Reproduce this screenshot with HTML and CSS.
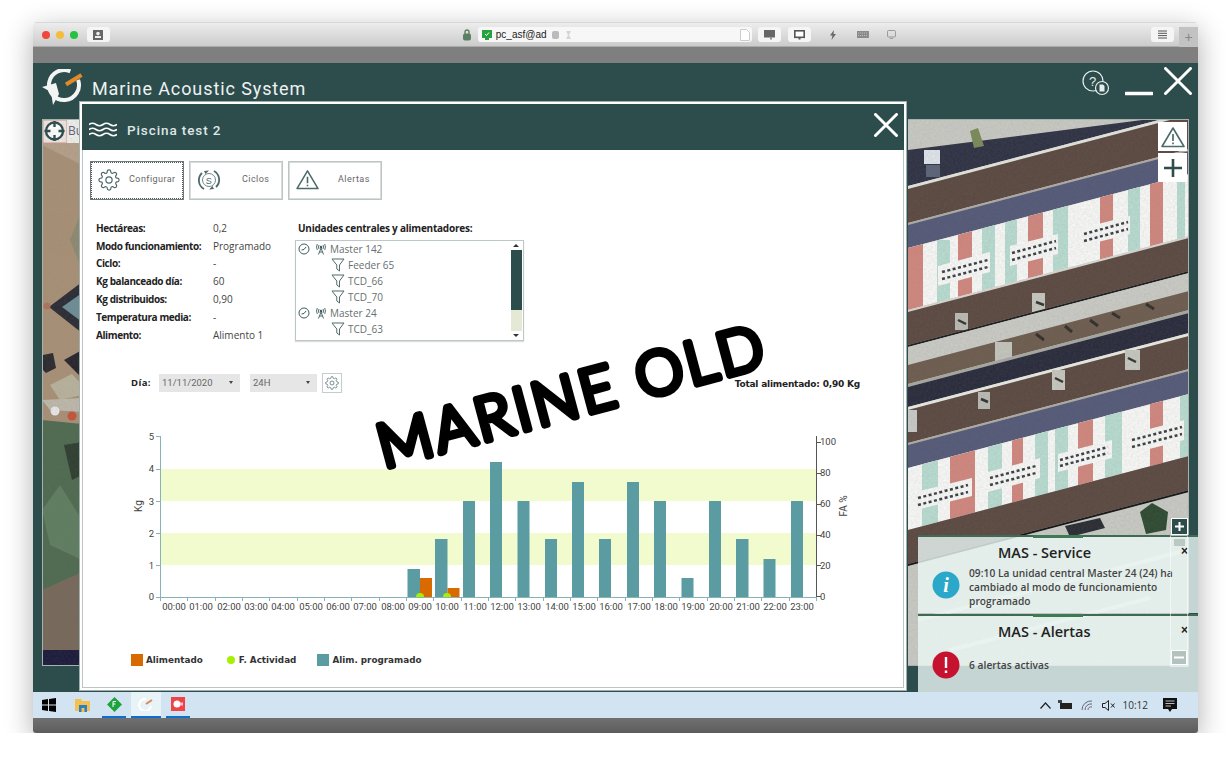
FILE: index.html
```html
<!DOCTYPE html>
<html>

<head>
  <meta charset="utf-8">
  <title>Marine Acoustic System</title>
  <link rel="stylesheet" href="styles.css">
</head>

<body>

  <svg class="defs" width="0" height="0">
    <symbol id="gear" viewBox="0 0 24 24">
      <circle cx="12" cy="12" r="3.4" fill="none" stroke="currentColor" stroke-width="1.3" />
      <path fill="none" stroke="currentColor" stroke-width="1.3" d="M19.4 15a1.65 1.65 0 0 0 .33 1.82l.06.06a2 2 0 0 1 0 2.83 2 2 0 0 1-2.83 0l-.06-.06a1.65 1.65 0 0 0-1.82-.33 1.65 1.65 0 0 0-1 1.51V21a2 2 0 0 1-2 2 2 2 0 0 1-2-2v-.09A1.65 1.65 0 0 0 9 19.4a1.65 1.65 0 0 0-1.82.33l-.06.06a2 2 0 0 1-2.83 0 2 2 0 0 1 0-2.83l.06-.06a1.65 1.65 0 0 0 .33-1.82 1.65 1.65 0 0 0-1.51-1H3a2 2 0 0 1-2-2 2 2 0 0 1 2-2h.09A1.65 1.65 0 0 0 4.6 9a1.65 1.65 0 0 0-.33-1.82l-.06-.06a2 2 0 0 1 0-2.83 2 2 0 0 1 2.83 0l.06.06a1.65 1.65 0 0 0 1.82.33H9a1.65 1.65 0 0 0 1-1.51V3a2 2 0 0 1 2-2 2 2 0 0 1 2 2v.09a1.65 1.65 0 0 0 1 1.51 1.65 1.65 0 0 0 1.82-.33l.06-.06a2 2 0 0 1 2.83 0 2 2 0 0 1 0 2.83l-.06.06a1.65 1.65 0 0 0-.33 1.82V9a1.65 1.65 0 0 0 1.51 1H21a2 2 0 0 1 2 2 2 2 0 0 1-2 2h-.09a1.65 1.65 0 0 0-1.51 1z" />
    </symbol>
    <symbol id="warn" viewBox="0 0 24 22">
      <path d="M12 2 L23 20.500 H1 Z" fill="none" stroke="currentColor" stroke-width="1.600" stroke-linejoin="round" />
      <path d="M12 8 V15 M12 16.500 V18.200" fill="none" stroke="currentColor" stroke-width="1.700" />
    </symbol>
    <symbol id="funnel" viewBox="0 0 14 14">
      <path d="M1 1 H13 L8.500 7 V13 L5.800 11 V7 Z" fill="none" stroke="#4f6a6a" stroke-width="1" />
    </symbol>
    <symbol id="clock" viewBox="0 0 12 12">
      <circle cx="6" cy="6" r="5" fill="none" stroke="#3d5a5a" stroke-width="1" />
      <path d="M3.500 7 L6 6.500 L8 4" fill="none" stroke="#3d5a5a" stroke-width="1" />
    </symbol>
    <symbol id="antenna" viewBox="0 0 12 12">
      <path d="M6 5 L3.500 11.500 M6 5 L8.500 11.500 M4.500 9 H7.500 M4 2 Q3 4 4 6 M8 2 Q9 4 8 6 M2.300 1 Q.8 4 2.300 7 M9.700 1 Q11.200 4 9.700 7" fill="none" stroke="#3d5a5a" stroke-width=".9" />
      <circle cx="6" cy="4" r="1.200" fill="#3d5a5a" />
    </symbol>
  </svg>

  <div class="window">

    <div class="titlebar">
      <span class="light red"></span>
      <span class="light yellow"></span>
      <span class="light green"></span>
      <span class="tbtn contact">
        <svg width="10" height="10" viewBox="0 0 10 10">
          <rect width="10" height="10" fill="#666" />
          <circle cx="5" cy="3.600" r="1.800" fill="#eee" />
          <rect x="2" y="6" width="6" height="2" fill="#eee" />
        </svg>
      </span>
      <svg class="lock" width="8" height="12" viewBox="0 0 8 12">
        <path d="M2 5 V3 a2 2 0 0 1 4 0 V5" fill="none" stroke="#5a7f62" stroke-width="1.400" />
        <rect y="4.500" width="8" height="7" rx="2" fill="#5a7f62" />
      </svg>
      <div class="urlbar">
        <svg width="10" height="10" viewBox="0 0 10 10">
          <rect width="10" height="8" fill="#27a23e" />
          <rect x="3" y="8" width="4" height="2" fill="#27a23e" />
          <path d="M3 4 L4.500 5.500 L7 2.500" fill="none" stroke="#fff" stroke-width="1" />
        </svg>
        <span class="url">pc_asf@ad</span>
        <svg class="url-db" width="7" height="8" viewBox="0 0 7 8">
          <rect width="7" height="8" rx="2" fill="#bbb" />
        </svg>
        <svg class="url-glass" width="5" height="8" viewBox="0 0 5 8">
          <path d="M0 0 H5 L3 4 L5 8 H0 L2 4 Z" fill="#d5d5d5" />
        </svg>
        <svg class="url-doc" width="10" height="12" viewBox="0 0 10 12">
          <path d="M.5 .5 H6.500 L9.500 3.500 V11.500 H.5 Z" fill="#fff" stroke="#ccc" />
        </svg>
      </div>
      <span class="tbtn screen-a">
        <svg width="11" height="10" viewBox="0 0 11 10">
          <rect width="11" height="7.500" fill="#666" />
          <rect x="6" y="7.500" width="2" height="2" fill="#888" />
        </svg>
      </span>
      <span class="tbtn screen-b">
        <svg width="11" height="10" viewBox="0 0 11 10">
          <rect x=".8" y=".8" width="9.400" height="6.500" fill="#fff" stroke="#555" stroke-width="1.600" />
          <rect x="4.500" y="7.500" width="2" height="2" fill="#555" />
        </svg>
      </span>
      <svg class="bolt" width="6" height="10" viewBox="0 0 6 10">
        <path d="M4 0 L0 5.500 H2.500 L1.500 10 L6 4 H3.500 Z" fill="#666" />
      </svg>
      <svg class="keys" width="12" height="7" viewBox="0 0 12 7">
        <rect width="12" height="7" fill="#8a8a8a" />
        <path d="M1 2 H11 M1 4.500 H11" stroke="#ccc" stroke-width=".8" stroke-dasharray="1 1" />
      </svg>
      <svg class="mon" width="9" height="9" viewBox="0 0 9 9">
        <rect x=".5" y=".5" width="8" height="6.500" rx="1" fill="none" stroke="#999" />
        <path d="M3 8.500 H6" stroke="#999" />
      </svg>
      <span class="tbtn menu">
        <svg width="9" height="9" viewBox="0 0 9 9">
          <path d="M0 1 H9 M0 3.300 H9 M0 5.600 H9 M0 8 H9" stroke="#555" stroke-width="1" />
        </svg>
      </span>
      <span class="newtab">+</span>
    </div>

    <div class="graybar"></div>

    <div class="app">

      <div class="app-head">
        <svg class="logo" width="42" height="38" viewBox="42 69 42 38">
          <path d="M70.300 71.400 A15 15 0 1 0 78.100 79.900" fill="none" stroke="#f2f5f4" stroke-width="4" />
          <polygon points="42,87 56,83 59,94 53,105 51,92" fill="#f2f5f4" />
          <path d="M66 84.500 L81.500 75" stroke="#e08a2a" stroke-width="4" />
        </svg>
        <h1 class="app-title">Marine Acoustic System</h1>
        <svg class="app-help" width="28" height="26" viewBox="0 0 28 26">
          <circle cx="11" cy="11" r="10" fill="none" stroke="#e6eeee" stroke-width="1.200" />
          <text x="7" y="16" class="help-q">?</text>
          <circle cx="20" cy="18" r="6.500" fill="#2d4d4d" stroke="#e6eeee" stroke-width="1.200" />
          <path d="M17.500 14.500 H21 L22.500 16 V21.500 H17.500 Z" fill="#e6eeee" />
        </svg>
        <svg class="app-min" width="28" height="5" viewBox="0 0 28 5">
          <path d="M1 2.500 H27" stroke="#fff" stroke-width="3.500" stroke-linecap="round" />
        </svg>
        <svg class="app-close" width="28" height="28" viewBox="0 0 28 28">
          <path d="M1.500 1.500 L26.500 26.500 M26.500 1.500 L1.500 26.500" stroke="#fff" stroke-width="3" stroke-linecap="round" />
        </svg>
      </div>

      <svg class="map" width="1147" height="547" viewBox="42 119 1147 547">
        <defs>
          <clipPath id="roofTop">
            <polygon points="908,248 1189,174 1189,236 908,310" />
          </clipPath>
          <clipPath id="roofLow">
            <polygon points="908,468 1189,394 1189,456 908,530" />
          </clipPath>
          <filter id="grain" x="0" y="0" width="100%" height="100%">
            <feTurbulence type="fractalNoise" baseFrequency=".45" numOctaves="2" seed="4" />
            <feColorMatrix type="matrix" values="0 0 0 0 .2  0 0 0 0 .2  0 0 0 0 .2  .9 .9 0 0 -.55" />
          </filter>
        </defs>

        <!-- left sliver of the photo -->
        <rect x="42" y="119" width="40" height="547" fill="#a89076" />
        <polygon points="42,145 82,165 82,119 42,119" fill="#b5a08a" />
        <polygon points="70,240 82,210 82,270" fill="#8f8a72" />
        <polygon points="49,307 82,282 82,333" fill="#2b2c35" />
        <polygon points="62,307 82,293 82,322" fill="#6e8d96" />
        <circle cx="47" cy="306" r="3.500" fill="#b0725c" />
        <polygon points="43,355 53,353 56,368 46,373 43,370" fill="#2b2b30" />
        <polygon points="64,360 82,350 82,378" fill="#26262c" />
        <polygon points="50,385 72,374 82,385 82,395 60,400" fill="#b8b29c" />
        <polygon points="42,400 82,398 82,412 50,410" fill="#bdb8aa" />
        <circle cx="55" cy="411" r="4.500" fill="#e8e8e8" />
        <circle cx="72" cy="416" r="4.500" fill="#c4553a" />
        <polygon points="42,420 82,424 82,585 42,590" fill="#4f6b50" />
        <polygon points="64,445 82,442 82,475 72,480" fill="#2f3f30" />
        <polygon points="42,510 60,485 82,520 82,560 50,545" fill="#5f7d60" />
        <polygon points="42,590 82,572 82,660 42,650" fill="#77695a" />
        <rect x="42" y="650" width="40" height="16" fill="#1c1b3c" />

        <!-- crosshair button and search box -->
        <rect x="43" y="120" width="24" height="23" fill="#f0e6e2" stroke="#c99a90" />
        <rect x="67" y="120" width="15" height="23" fill="#eeeeea" />
        <text x="68" y="135" class="map-search">Bu</text>
        <circle cx="54.500" cy="131" r="8.500" fill="#fff" stroke="#2d4d4d" stroke-width="2.400" />
        <path d="M54.500 121 V127 M54.500 135 V141 M44.500 131 H50.500 M58.500 131 H64.500" stroke="#2d4d4d" stroke-width="2.400" />

        <!-- right part of the photo: concrete and roofs follow the same slope -->
        <rect x="908" y="119" width="281" height="547" fill="#c8c9c3" />
        <polygon points="908,150 1150,119 1189,119 1189,112 908,186" fill="#2f3344" />
        <rect x="924" y="150" width="16" height="14" fill="#dfe4ea" />
        <rect x="926" y="165" width="14" height="12" fill="#5c6478" />
        <polygon points="970,131 978,128 984,146 974,148" fill="#7b8a5a" />
        <polygon points="908,186 1189,112 1189,115 908,189" fill="#e4e4de" />
        <polygon points="908,189 1189,115 1189,149 908,223" fill="#5c4a42" />
        <polygon points="908,223 1189,149 1189,151 908,225" fill="#b0aca4" />
        <polygon points="908,225 1189,151 1189,174 908,248" fill="#555a78" />

        <polygon points="908,248 1189,174 1189,236 908,310" fill="#f7f8f6" />
        <g clip-path="url(#roofTop)">
          <rect x="908" y="240" width="15" height="80" fill="#d0877e" />
          <rect x="937" y="240" width="13" height="80" fill="#b8dbd0" />
          <rect x="958" y="230" width="14" height="80" fill="#d0877e" />
          <rect x="982" y="220" width="13" height="90" fill="#b8dbd0" />
          <rect x="1005" y="220" width="12" height="90" fill="#b8dbd0" />
          <rect x="1028" y="210" width="15" height="90" fill="#d0877e" />
          <rect x="1053" y="200" width="15" height="90" fill="#b8dbd0" />
          <rect x="1100" y="190" width="13" height="90" fill="#d0877e" />
          <rect x="1128" y="180" width="12" height="90" fill="#b8dbd0" />
          <rect x="1150" y="170" width="13" height="90" fill="#d0877e" />
          <rect x="1177" y="170" width="8" height="80" fill="#b8dbd0" />
          <polygon points="938,266 990,252 990,272 938,286" fill="#f7f8f6" />
          <polygon points="1010,246 1058,234 1058,254 1010,266" fill="#f7f8f6" />
          <polygon points="1082,228 1130,216 1130,234 1082,246" fill="#f7f8f6" />
          <path d="M942 272 L988 260 M942 279 L988 267 M1012 253 L1056 241 M1012 260 L1056 248 M1084 234 L1128 222 M1084 241 L1128 229" stroke="#3c4046" stroke-width="2.500" stroke-dasharray="3 2.500" />
        </g>

        <polygon points="908,310 1189,236 1189,238 908,312" fill="#d8d6d0" />
        <polygon points="908,312 1189,238 1189,271 908,345" fill="#5c4a42" />
        <rect x="955" y="313" width="13" height="17" fill="#b9bab2" />
        <rect x="1032" y="293" width="13" height="19" fill="#c5c6bd" />
        <path d="M958 320 L966 324 M1036 302 L1044 305" stroke="#333" stroke-width="2.500" />
        <polygon points="908,345 1189,271 1189,273 908,347" fill="#1b1a1c" />
        <polygon points="908,347 1189,273 1189,291 908,365" fill="#c9cac4" />
        <polygon points="908,365 1189,291 1189,310 908,384" fill="#6e5d50" />
        <rect x="995" y="342" width="17" height="19" fill="#c3c4bc" />
        <path d="M1036 334 L1044 340 M1065 326 L1072 332 M1090 320 L1098 326 M1112 313 L1120 318 M1146 304 L1154 309" stroke="#33302c" stroke-width="3" />
        <polygon points="908,384 1189,310 1189,313 908,387" fill="#a8a8a2" />
        <polygon points="908,387 1189,313 1189,333 908,407" fill="#2a2c3d" />
        <polygon points="908,407 1189,333 1189,336 908,410" fill="#e9e9e2" />
        <polygon points="908,410 1189,336 1189,369 908,443" fill="#5c4a42" />
        <rect x="908" y="410" width="9" height="22" fill="#c7cac6" />
        <rect x="978" y="392" width="12" height="17" fill="#b9bab2" />
        <rect x="1052" y="370" width="13" height="20" fill="#c5c6bd" />
        <rect x="1125" y="350" width="15" height="20" fill="#c5c6bd" />
        <path d="M981 399 L988 402 M1055 378 L1063 382 M1128 358 L1136 362" stroke="#333" stroke-width="2.500" />
        <polygon points="908,443 1189,369 1189,371 908,445" fill="#b0aca4" />
        <polygon points="908,445 1189,371 1189,394 908,468" fill="#555a78" />

        <polygon points="908,468 1189,394 1189,456 908,530" fill="#f7f8f6" />
        <g clip-path="url(#roofLow)">
          <rect x="922" y="450" width="16" height="90" fill="#b8dbd0" />
          <rect x="950" y="450" width="25" height="80" fill="#d0877e" />
          <rect x="988" y="440" width="14" height="80" fill="#b8dbd0" />
          <rect x="1012" y="430" width="11" height="80" fill="#d0877e" />
          <rect x="1035" y="420" width="13" height="90" fill="#b8dbd0" />
          <rect x="1055" y="420" width="13" height="90" fill="#b8dbd0" />
          <rect x="1078" y="410" width="15" height="90" fill="#d0877e" />
          <rect x="1105" y="400" width="17" height="90" fill="#b8dbd0" />
          <rect x="1150" y="390" width="13" height="90" fill="#d0877e" />
          <rect x="1180" y="390" width="9" height="70" fill="#b8dbd0" />
          <polygon points="916,492 972,478 972,496 916,510" fill="#f7f8f6" />
          <polygon points="988,472 1040,458 1040,478 988,492" fill="#f7f8f6" />
          <polygon points="1058,454 1112,440 1112,458 1058,472" fill="#f7f8f6" />
          <polygon points="1130,434 1184,420 1184,440 1130,454" fill="#f7f8f6" />
          <path d="M918 498 L968 485 M918 505 L968 492 M990 478 L1036 466 M990 485 L1036 473 M1060 460 L1108 447 M1060 466 L1108 453 M1132 440 L1182 427 M1132 447 L1182 434" stroke="#3c4046" stroke-width="2.500" stroke-dasharray="3 2.500" />
        </g>

        <polygon points="908,530 1189,456 1189,490 908,564" fill="#5c4a42" />
        <polygon points="908,564 1189,490 1189,492 908,566" fill="#141414" />
        <polygon points="1140,512 1152,503 1168,512 1166,530 1146,534" fill="#2f4a32" />
        <polygon points="1065,526 1100,518 1105,528 1070,537" fill="#2a2d33" />
        <path d="M918 620 L1180 552 M950 650 L1150 598" stroke="#e2e3de" stroke-width="4" />

        <rect x="42" y="119" width="1147" height="547" filter="url(#grain)" opacity=".16" />
        <rect x="42.500" y="119.500" width="1146" height="546" fill="none" stroke="#a9b1ae" />
        <rect x="82" y="119" width="826" height="547" fill="#2d4d4d" />
      </svg>

      <div class="map-btns">
        <span class="map-btn">
          <svg width="24" height="22">
            <use href="#warn" />
          </svg>
        </span>
        <span class="map-btn">
          <svg width="20" height="20" viewBox="0 0 20 20">
            <path d="M10 1 V19 M1 10 H19" stroke="#2d4d4d" stroke-width="2.600" />
          </svg>
        </span>
      </div>

      <div class="zoom-ctl">
        <span class="zoom-plus">
          <svg width="9" height="9" viewBox="0 0 9 9">
            <path d="M4.500 0 V9 M0 4.500 H9" stroke="#fff" stroke-width="2" />
          </svg>
        </span>
        <div class="zoom-track">
          <span class="zoom-knob"></span>
          <span class="zoom-minus">
            <svg width="10" height="3" viewBox="0 0 10 3">
              <path d="M0 1.500 H10" stroke="#fff" stroke-width="2" />
            </svg>
          </span>
        </div>
      </div>

      <div class="toasts">
        <div class="toast">
          <h3 class="toast-title">MAS - Service</h3>
          <span class="toast-x">×</span>
          <div class="toast-body">
            <svg class="toast-icon" width="28" height="28" viewBox="0 0 28 28">
              <circle cx="14" cy="14" r="13.500" fill="#2ba7c9" />
              <text x="14" y="21" class="toast-i">i</text>
            </svg>
            <p class="toast-text">09:10 La unidad central Master 24 (24) ha cambiado al modo de funcionamiento programado</p>
          </div>
        </div>
        <div class="toast">
          <h3 class="toast-title">MAS - Alertas</h3>
          <span class="toast-x">×</span>
          <div class="toast-body low">
            <svg class="toast-icon" width="28" height="28" viewBox="0 0 28 28">
              <circle cx="14" cy="14" r="13.500" fill="#c4122f" />
              <path d="M14 6 V17 M14 19.500 V22" stroke="#fff" stroke-width="2.400" />
            </svg>
            <p class="toast-text">6 alertas activas</p>
          </div>
        </div>
      </div>

      <div class="modal">
        <div class="modal-head">
          <svg class="waves" width="28" height="15" viewBox="0 0 28 15">
            <path d="M0 2.500 Q3.500 0 7 2.500 T14 2.500 T21 2.500 T28 2.500 M0 7.500 Q3.500 5 7 7.500 T14 7.500 T21 7.500 T28 7.500 M0 12.500 Q3.500 10 7 12.500 T14 12.500 T21 12.500 T28 12.500" fill="none" stroke="#fff" stroke-width="1.600" />
          </svg>
          <h2 class="modal-title">Piscina test 2</h2>
          <svg class="modal-close" width="24" height="24" viewBox="0 0 24 24">
            <path d="M1.500 1.500 L22.500 22.500 M22.500 1.500 L1.500 22.500" stroke="#fff" stroke-width="3" stroke-linecap="round" />
          </svg>
        </div>

        <div class="tabs">
          <div class="tab active">
            <svg width="22" height="22">
              <use href="#gear" />
            </svg>
            <span>Configurar</span>
          </div>
          <div class="tab">
            <svg width="24" height="24" viewBox="0 0 24 24">
              <path d="M5 5 A10 10 0 0 0 7 21 M19 19 A10 10 0 0 0 17 3" fill="none" stroke="currentColor" stroke-width="1.800" />
              <path d="M7 3 L12 2.500 L8.500 6 Z M17 21 L12 21.500 L15.500 18 Z" fill="currentColor" />
              <circle cx="12" cy="12" r="6.500" fill="none" stroke="currentColor" stroke-width=".8" />
              <text x="12" y="15.500" class="tab-dollar">S</text>
            </svg>
            <span class="tab-label-wide">Ciclos</span>
          </div>
          <div class="tab">
            <svg width="23" height="21">
              <use href="#warn" />
            </svg>
            <span class="tab-label-alert">Alertas</span>
          </div>
        </div>

        <div class="info">
          <div class="facts">
            <b>Hectáreas:</b><span>0,2</span>
            <b>Modo funcionamiento:</b><span>Programado</span>
            <b>Ciclo:</b><span>-</span>
            <b>Kg balanceado día:</b><span>60</span>
            <b>Kg distribuidos:</b><span>0,90</span>
            <b>Temperatura media:</b><span>-</span>
            <b>Alimento:</b><span>Alimento 1</span>
          </div>
          <div class="units">
            <b class="units-title">Unidades centrales y alimentadores:</b>
            <div class="tree">
              <div class="tree-rows">
                <div class="tree-row">
                  <svg width="12" height="12"><use href="#clock" /></svg>
                  <svg class="ant" width="12" height="12"><use href="#antenna" /></svg>
                  <span>Master 142</span>
                </div>
                <div class="tree-row leaf">
                  <svg width="14" height="14"><use href="#funnel" /></svg>
                  <span>Feeder 65</span>
                </div>
                <div class="tree-row leaf">
                  <svg width="14" height="14"><use href="#funnel" /></svg>
                  <span>TCD_66</span>
                </div>
                <div class="tree-row leaf">
                  <svg width="14" height="14"><use href="#funnel" /></svg>
                  <span>TCD_70</span>
                </div>
                <div class="tree-row">
                  <svg width="12" height="12"><use href="#clock" /></svg>
                  <svg class="ant" width="12" height="12"><use href="#antenna" /></svg>
                  <span>Master 24</span>
                </div>
                <div class="tree-row leaf">
                  <svg width="14" height="14"><use href="#funnel" /></svg>
                  <span>TCD_63</span>
                </div>
              </div>
              <div class="scroll">
                <span class="arrow up"></span>
                <div class="scroll-track">
                  <div class="scroll-thumb"></div>
                </div>
                <span class="arrow down"></span>
              </div>
            </div>
          </div>
        </div>

        <div class="dayrow">
          <b class="day-label">Día:</b>
          <div class="combo date">11/11/2020<span class="caret"></span></div>
          <div class="combo range">24H<span class="caret"></span></div>
          <span class="day-gear">
            <svg width="14" height="14">
              <use href="#gear" />
            </svg>
          </span>
          <b class="total">Total alimentado: 0,90 Kg</b>
        </div>

        <svg class="chart" width="760" height="190" viewBox="120 430 760 190">
          <rect x="160" y="469" width="656" height="32" fill="#f2fbcd" />
          <rect x="160" y="533" width="656" height="32" fill="#f2fbcd" />

          <g fill="#5b9ba2">
            <rect x="407.500" y="569" width="12.500" height="28" />
            <rect x="435" y="539" width="12.500" height="58" />
            <rect x="463" y="501" width="12" height="96" />
            <rect x="490" y="462" width="12" height="135" />
            <rect x="517.500" y="501" width="12" height="96" />
            <rect x="545" y="539" width="12" height="58" />
            <rect x="572" y="482" width="12" height="115" />
            <rect x="599" y="539" width="12" height="58" />
            <rect x="627" y="482" width="12" height="115" />
            <rect x="654" y="501" width="12" height="96" />
            <rect x="681.500" y="578" width="12" height="19" />
            <rect x="709" y="501" width="12" height="96" />
            <rect x="736" y="539" width="12.500" height="58" />
            <rect x="763.500" y="559" width="12" height="38" />
            <rect x="791" y="501" width="12" height="96" />
          </g>
          <rect x="420" y="578" width="12" height="19" fill="#d96a00" />
          <rect x="447.500" y="588" width="12" height="9" fill="#d96a00" />
          <path d="M416 597 a4 4 0 0 1 8 0 Z M443 597 a4 4 0 0 1 8 0 Z" fill="#a6f000" />

          <path d="M160.500 436 V597.500 H816 M156 436.500 H160 M156 469.500 H160 M156 501.500 H160 M156 533.500 H160 M156 565.500 H160 M156 597.500 H160" fill="none" stroke="#86b2b8" />
          <path d="M160.500 597 V601 M187.500 597 V601 M215.500 597 V601 M242.500 597 V601 M269.500 597 V601 M297.500 597 V601 M324.500 597 V601 M351.500 597 V601 M379.500 597 V601 M406.500 597 V601 M433.500 597 V601 M461.500 597 V601 M488.500 597 V601 M515.500 597 V601 M543.500 597 V601 M570.500 597 V601 M597.500 597 V601 M625.500 597 V601 M652.500 597 V601 M679.500 597 V601 M707.500 597 V601 M734.500 597 V601 M761.500 597 V601 M789.500 597 V601 M816.500 597 V601" stroke="#86b2b8" />
          <path d="M816.500 436 V597 M816 442.500 H821 M816 473.500 H821 M816 504.500 H821 M816 535.500 H821 M816 565.500 H821 M816 596.500 H821" fill="none" stroke="#555" />

          <g class="tick-left">
            <text x="154" y="440">5</text>
            <text x="154" y="472">4</text>
            <text x="154" y="505">3</text>
            <text x="154" y="537">2</text>
            <text x="154" y="569">1</text>
            <text x="154" y="600">0</text>
          </g>
          <g class="tick-right">
            <text x="820" y="445">100</text>
            <text x="820" y="476">80</text>
            <text x="820" y="507">60</text>
            <text x="820" y="538">40</text>
            <text x="820" y="569">20</text>
            <text x="820" y="600">0</text>
          </g>
          <g class="tick-hour">
            <text x="174" y="610">00:00</text>
            <text x="201" y="610">01:00</text>
            <text x="229" y="610">02:00</text>
            <text x="256" y="610">03:00</text>
            <text x="283" y="610">04:00</text>
            <text x="311" y="610">05:00</text>
            <text x="338" y="610">06:00</text>
            <text x="365" y="610">07:00</text>
            <text x="393" y="610">08:00</text>
            <text x="420" y="610">09:00</text>
            <text x="447" y="610">10:00</text>
            <text x="475" y="610">11:00</text>
            <text x="502" y="610">12:00</text>
            <text x="529" y="610">13:00</text>
            <text x="557" y="610">14:00</text>
            <text x="584" y="610">15:00</text>
            <text x="611" y="610">16:00</text>
            <text x="639" y="610">17:00</text>
            <text x="666" y="610">18:00</text>
            <text x="693" y="610">19:00</text>
            <text x="721" y="610">20:00</text>
            <text x="748" y="610">21:00</text>
            <text x="775" y="610">22:00</text>
            <text x="802" y="610">23:00</text>
          </g>
          <text class="axis-name" transform="translate(142 506) rotate(-90)">Kg</text>
          <text class="axis-name" transform="translate(847 506) rotate(-90)">FA %</text>
        </svg>

        <div class="legend">
          <span class="legend-item first"><i class="swatch orange"></i>Alimentado</span>
          <span class="legend-item second"><i class="swatch dot"></i>F. Actividad</span>
          <span class="legend-item third"><i class="swatch teal"></i>Alim. programado</span>
        </div>

        <svg class="stamp" width="420" height="160" viewBox="360 320 420 160">
          <text class="stamp-text" transform="translate(384 468) rotate(-15)">MARINE OLD</text>
        </svg>
      </div>

    </div>

    <div class="taskbar">
      <svg class="start" width="14" height="14" viewBox="0 0 14 14">
        <path d="M0 2 L6 1 V6.500 H0 Z M7 .9 L14 0 V6.500 H7 Z M0 7.500 H6 V13 L0 12 Z M7 7.500 H14 V14 L7 13.100 Z" fill="#000" />
      </svg>
      <span class="task plain">
        <svg width="15" height="14" viewBox="0 0 15 14">
          <path d="M0 1 H6 L7 3 H15 V13 H0 Z" fill="#f4c04e" />
          <rect x="4" y="7" width="8" height="7" fill="#2a7fc9" />
          <rect x="6.500" y="10" width="3" height="4" fill="#f4c04e" />
        </svg>
      </span>
      <span class="task open">
        <svg width="15" height="15" viewBox="0 0 15 15">
          <polygon points="7.500,0 15,7.500 7.500,15 0,7.500" fill="#1ca33c" />
          <path d="M6 4.500 H9 M6 4.500 V10 M6 7 H8.500" stroke="#fff" stroke-width="1" fill="none" />
        </svg>
      </span>
      <span class="task open wide">
        <svg width="16" height="14" viewBox="0 0 16 14">
          <path d="M8 2 A6 6 0 1 0 13 9" fill="none" stroke="#fff" stroke-width="2" />
          <path d="M8 7 L14 3" stroke="#d98a5a" stroke-width="2" />
        </svg>
      </span>
      <span class="task open">
        <svg width="14" height="14" viewBox="0 0 14 14">
          <rect width="14" height="14" fill="#ee4444" />
          <circle cx="6" cy="7" r="3.500" fill="#fff" />
          <rect x="9" y="5.500" width="3" height="3" fill="#fbd" />
        </svg>
      </span>
      <div class="tray">
        <svg class="tray-up" width="11" height="7" viewBox="0 0 11 7">
          <path d="M.5 6.500 L5.500 1 L10.500 6.500" fill="none" stroke="#222" stroke-width="1.200" />
        </svg>
        <svg width="14" height="10" viewBox="0 0 14 10">
          <rect x="2" y="3" width="12" height="6" fill="#222" />
          <path d="M0 0 H4 V3 H0 Z" fill="#444" />
        </svg>
        <svg width="12" height="11" viewBox="0 0 12 11">
          <path d="M1 10 A9 9 0 0 1 11 1 M4 10 A6 6 0 0 1 11 4 M7 10 A3 3 0 0 1 11 7" fill="none" stroke="#667" stroke-width="1" />
        </svg>
        <svg width="13" height="11" viewBox="0 0 13 11">
          <path d="M.5 3.500 H3 L6.500 .5 V10.500 L3 7.500 H.5 Z" fill="none" stroke="#222" />
          <path d="M9 3.500 L12.500 7.500 M12.500 3.500 L9 7.500" stroke="#222" />
        </svg>
        <span class="clock">10:12</span>
        <svg class="notify" width="14" height="14" viewBox="0 0 14 14">
          <path d="M0 0 H14 V11 H9 L7 14 L5 11 H0 Z" fill="#111" />
          <path d="M2.500 3 H11.500 M2.500 5.500 H11.500 M2.500 8 H8" stroke="#dfe8f2" stroke-width=".8" />
        </svg>
      </div>
    </div>

    <div class="bottombar"></div>
  </div>

</body>

</html>
```

FILE: styles.css
```css
body {
  margin: 0;
  background: #fff;
  font-family: "Open Sans", sans-serif;
  color: #222;
}

svg {
  display: block;
}

.defs {
  position: absolute;
}

.window {
  width: 1165px;
  height: 711px;
  margin: 22px 0 0 33px;
  display: flex;
  flex-direction: column;
  border-radius: 4px 4px 3px 3px;
  box-shadow: 0 8px 28px rgba(0, 0, 0, 0.32);
  overflow: hidden;
}

/* Browser title bar */
.titlebar {
  height: 25px;
  flex: none;
  display: flex;
  align-items: center;
  padding-left: 9px;
  box-sizing: border-box;
  background: linear-gradient(#ededed, #cbcbcb);
  border-top: 1px solid #d8d8d8;
  border-bottom: 1px solid #aaa;
}

.light {
  width: 8px;
  height: 8px;
  border-radius: 50%;
  margin-right: 6px;
}

.light.red {
  background: #f0473f;
}

.light.yellow {
  background: #f5bd3c;
}

.light.green {
  background: #27c23f;
}

.tbtn {
  height: 15px;
  display: flex;
  align-items: center;
  justify-content: center;
  background: #f5f5f5;
  border-radius: 3px;
}

.contact {
  width: 23px;
  margin-left: 3px;
}

.lock {
  margin-left: 353px;
}

.urlbar {
  width: 275px;
  height: 15px;
  margin-left: 7px;
  padding-left: 4px;
  box-sizing: border-box;
  display: flex;
  align-items: center;
  background: #f7f7f7;
  border-radius: 3px;
}

.url {
  margin-left: 4px;
  font: 10px "Liberation Sans", sans-serif;
  color: #222;
}

.url-db {
  margin-left: 5px;
}

.url-glass {
  margin-left: 7px;
}

.url-doc {
  margin-left: auto;
  margin-right: 2px;
}

.screen-a {
  width: 24px;
  margin-left: 6px;
}

.screen-b {
  width: 23px;
  margin-left: 7px;
}

.bolt {
  margin-left: 19px;
}

.keys {
  margin-left: 21px;
}

.mon {
  margin-left: 18px;
}

.menu {
  width: 23px;
  margin-left: 255px;
}

.newtab {
  width: 19px;
  height: 20px;
  margin: 4px 0 0 5px;
  background: #c2c2c2;
  color: #888;
  font: 14px/20px "Liberation Sans", sans-serif;
  text-align: center;
}

.graybar {
  height: 16px;
  flex: none;
  background: #7f7f7f;
}

/* Application */
.app {
  position: relative;
  height: 629px;
  flex: none;
  background: #2d4d4d;
}

.app-head {
  height: 56px;
  display: flex;
  align-items: center;
  padding: 0 6px 0 9px;
}

.logo {
  margin-bottom: 6px;
}

.app-title {
  margin: 0 0 6px 8px;
  font: 400 18px Roboto, sans-serif;
  letter-spacing: 0.9px;
  color: #eef2f2;
}

.app-help {
  margin: 0 0 16px auto;
}

.help-q {
  font: 13px "Liberation Sans", sans-serif;
  fill: #e6eeee;
}

.app-min {
  margin: 4px 0 0 15px;
}

.app-close {
  margin: 0 0 20px 11px;
}

.map {
  margin-left: 9px;
}

.map-search {
  font: 12px "Open Sans", sans-serif;
  fill: #667;
}

.map-btns {
  position: absolute;
  left: 1125px;
  top: 59px;
  display: flex;
  flex-direction: column;
  gap: 2px;
}

.map-btn {
  width: 29px;
  height: 29px;
  display: flex;
  align-items: center;
  justify-content: center;
  background: #fff;
  color: #4d6a6a;
}

.zoom-ctl {
  position: absolute;
  left: 1137px;
  top: 455px;
  z-index: 3;
  display: flex;
  flex-direction: column;
  align-items: center;
}

.zoom-plus {
  width: 15px;
  height: 15px;
  display: flex;
  align-items: center;
  justify-content: center;
  background: #2d4d4d;
  border: 1px solid #fff;
}

.zoom-track {
  width: 18px;
  height: 132px;
  box-sizing: border-box;
  display: flex;
  flex-direction: column;
  align-items: center;
  justify-content: space-between;
  padding: 3px 0 1px;
  border: 1px solid rgba(255, 255, 255, 0.55);
}

.zoom-knob {
  width: 11px;
  height: 7px;
  background: #bcc8c6;
}

.zoom-minus {
  width: 14px;
  height: 13px;
  display: flex;
  align-items: center;
  justify-content: center;
  background: rgba(160, 175, 172, 0.7);
  border: 1px solid #fff;
}

.toasts {
  position: absolute;
  left: 885px;
  right: 0;
  top: 472px;
  z-index: 2;
  display: flex;
  flex-direction: column;
  gap: 1px;
}

.toast {
  position: relative;
  height: 78px;
  box-sizing: border-box;
  padding-top: 6px;
  background: rgba(235, 247, 245, 0.8);
  border-top: 2px solid #3f6b55;
}

/* darker piece in the middle of the top line */
.toast::before {
  content: "";
  position: absolute;
  left: 115px;
  top: -2px;
  width: 50px;
  height: 3px;
  background: #3f7a55;
}

.toast-title {
  margin: 0;
  padding-left: 80px;
  font: 600 14.5px/19px "Open Sans", sans-serif;
  color: #222;
}

.toast-x {
  position: absolute;
  right: 10px;
  top: 7px;
  font: 700 12px "Liberation Sans", sans-serif;
  color: #222;
}

.toast-body {
  display: flex;
  align-items: flex-start;
  padding-left: 14px;
  margin-top: 2px;
}

.toast-body.low {
  margin-top: 3px;
}

.toast-icon {
  flex: none;
  margin-top: 7px;
}

.toast-i {
  font: italic 700 20px "Liberation Serif", serif;
  fill: #fff;
  text-anchor: middle;
}

.toast-text {
  width: 212px;
  margin: 2px 0 0 9px;
  font: 600 10.2px/14px "Open Sans", sans-serif;
  letter-spacing: 0.05px;
  color: #444;
}

.low .toast-text {
  margin-top: 14px;
}

/* Dialog */
.modal {
  position: absolute;
  left: 47px;
  top: 39px;
  z-index: 1;
  width: 826px;
  height: 588px;
  box-sizing: border-box;
  background: #fff;
  border: 2px solid #fff;
  box-shadow: 0 0 0 1px #9fb0ae, inset 0 0 0 1px #bcc4c4;
}

.modal-head {
  height: 46px;
  display: flex;
  align-items: center;
  padding: 0 6px 0 7px;
  background: #2d4d4d;
}

.modal-title {
  margin: 6px 0 0 10px;
  font: 500 13.5px Roboto, sans-serif;
  letter-spacing: 0.9px;
  color: #dfe6e6;
}

.waves {
  margin-top: 4px;
}

.modal-close {
  margin: 0 0 5px auto;
}

.tabs {
  display: flex;
  gap: 5px;
  padding: 11px 0 0 8px;
}

.tab {
  width: 94px;
  height: 39px;
  box-sizing: border-box;
  display: flex;
  align-items: center;
  padding: 0 0 2px 7px;
  border: 1px solid #bcc4c4;
  outline: 1px solid #d8dcdc;
  outline-offset: -2px;
  color: #4d6a6a;
  font: 9px Roboto, sans-serif;
  letter-spacing: 0.45px;
}

.tab span {
  margin: 0 0 1px 9px;
  color: #666;
}

.tab .tab-label-wide {
  margin-left: 21px;
}

.tab .tab-label-alert {
  margin-left: 19px;
}

.tab.active {
  border: 1px solid #6a7c7c;
  outline: 1px dotted #555;
}

.tab-dollar {
  font: 9px "Liberation Sans", sans-serif;
  fill: currentColor;
  text-anchor: middle;
}

.info {
  display: flex;
  padding: 19px 0 0 14px;
}

.facts {
  display: grid;
  grid-template-columns: 117px 85px;
  grid-auto-rows: 17.8px;
  align-items: center;
  font-size: 10px;
  color: #444;
}

.facts b,
.units-title,
.day-label {
  font: 700 10px "Open Sans", sans-serif;
  color: #222;
}

.facts b {
  letter-spacing: -0.42px;
}

.units-title {
  display: block;
  line-height: 18px;
  letter-spacing: -0.23px;
}

.tree {
  width: 229px;
  height: 101px;
  margin: 3px 0 0 -3px;
  box-sizing: border-box;
  display: flex;
  border: 1px solid #bcc8c8;
  box-shadow: 0 1px 1px #ddd;
}

.tree-rows {
  flex: 1;
  padding: 0 0 0 2px;
}

.tree-row {
  height: 16px;
  display: flex;
  align-items: center;
  font-size: 10px;
  color: #666f6f;
}

.tree-row .ant {
  margin-left: 5px;
}

.tree-row span {
  margin-left: 3px;
}

.tree-row.leaf {
  padding-left: 33px;
}

.scroll {
  width: 12px;
  margin-right: 1px;
  display: flex;
  flex-direction: column;
  align-items: center;
}

.scroll-track {
  flex: 1;
  width: 11px;
  background: #e6e8d6;
}

.scroll-thumb {
  height: 60px;
  background: #2d4d4d;
}

.arrow {
  width: 0;
  height: 0;
  margin: 3px 0;
  border-left: 3px solid transparent;
  border-right: 3px solid transparent;
}

.arrow.up {
  border-bottom: 3px solid #333;
}

.arrow.down {
  border-top: 3px solid #333;
}

.dayrow {
  height: 18px;
  margin-top: 30px;
  padding-left: 49px;
  display: flex;
  align-items: center;
  font: 9.5px Roboto, sans-serif;
  color: #666;
}

.day-label {
  width: 28px;
  font-size: 9.5px;
  letter-spacing: 0.4px;
}

.combo {
  height: 18px;
  box-sizing: border-box;
  padding: 0 7px 0 3px;
  display: flex;
  align-items: center;
  justify-content: space-between;
  background: #e6e6e6;
}

.combo.date {
  width: 81px;
}

.combo.range {
  width: 67px;
  margin-left: 10px;
}

.caret {
  width: 0;
  height: 0;
  border-left: 2.5px solid transparent;
  border-right: 2.5px solid transparent;
  border-top: 3px solid #444;
}

.day-gear {
  width: 20px;
  height: 20px;
  margin-left: 5px;
  box-sizing: border-box;
  display: flex;
  align-items: center;
  justify-content: center;
  border: 1px solid #c6cccc;
  color: #4d6a6a;
}

.total {
  margin-left: auto;
  padding: 2px 44px 0 0;
  font: 700 9px "DejaVu Sans", sans-serif;
  letter-spacing: -0.2px;
  color: #222;
}

.chart {
  margin: 38px 0 0 38px;
}

.chart text {
  font: 9.5px Roboto, sans-serif;
  fill: #444;
}

.tick-left text {
  text-anchor: end;
}

.tick-hour text {
  text-anchor: middle;
}

.chart .axis-name {
  font-size: 10px;
  text-anchor: middle;
}

.legend {
  display: flex;
  align-items: center;
  margin-top: 34px;
  padding-left: 49px;
  font: 700 8.8px "DejaVu Sans", sans-serif;
  color: #333;
}

.legend-item {
  display: flex;
  align-items: center;
}

.second {
  margin-left: 24px;
}

.third {
  margin-left: 21px;
}

.swatch {
  width: 12px;
  height: 12px;
  margin-right: 3px;
}

.swatch.orange {
  background: #d96a00;
}

.swatch.teal {
  background: #5b9ba2;
}

.swatch.dot {
  width: 8px;
  height: 8px;
  margin-right: 4px;
  border-radius: 50%;
  background: #a6f000;
}

.stamp {
  position: absolute;
  left: 278px;
  top: 216px;
  overflow: visible;
}

.stamp-text {
  font: 300 60px Lato, sans-serif;
  letter-spacing: 3.5px;
  fill: #000;
  stroke: #000;
  stroke-width: 7px;
  stroke-linejoin: round;
  stroke-linecap: round;
}

/* Windows task bar */
.taskbar {
  height: 26px;
  flex: none;
  display: flex;
  align-items: center;
  padding-left: 9px;
  box-sizing: border-box;
  background: #d2e4f1;
}

.task {
  height: 26px;
  box-sizing: border-box;
  display: flex;
  align-items: center;
  justify-content: center;
}

.task.plain {
  width: 15px;
  margin-left: 19px;
}

.task.open {
  width: 24px;
  margin-left: 5px;
  border-bottom: 2px solid #0f6fd0;
}

.task.plain + .task.open {
  margin-left: 12px;
}

.task.open.wide {
  width: 30px;
  background: #e8f3f7;
}

.tray {
  margin-left: auto;
  padding-right: 21px;
  display: flex;
  align-items: center;
  gap: 9px;
}

.tray-up {
  margin-right: -2px;
}

.clock {
  margin-left: -1px;
  font: 10px "Open Sans", sans-serif;
  color: #333;
}

.notify {
  margin-left: 6px;
}

.bottombar {
  flex: 1;
  background: linear-gradient(#707070, #5c5c5c);
}
```
